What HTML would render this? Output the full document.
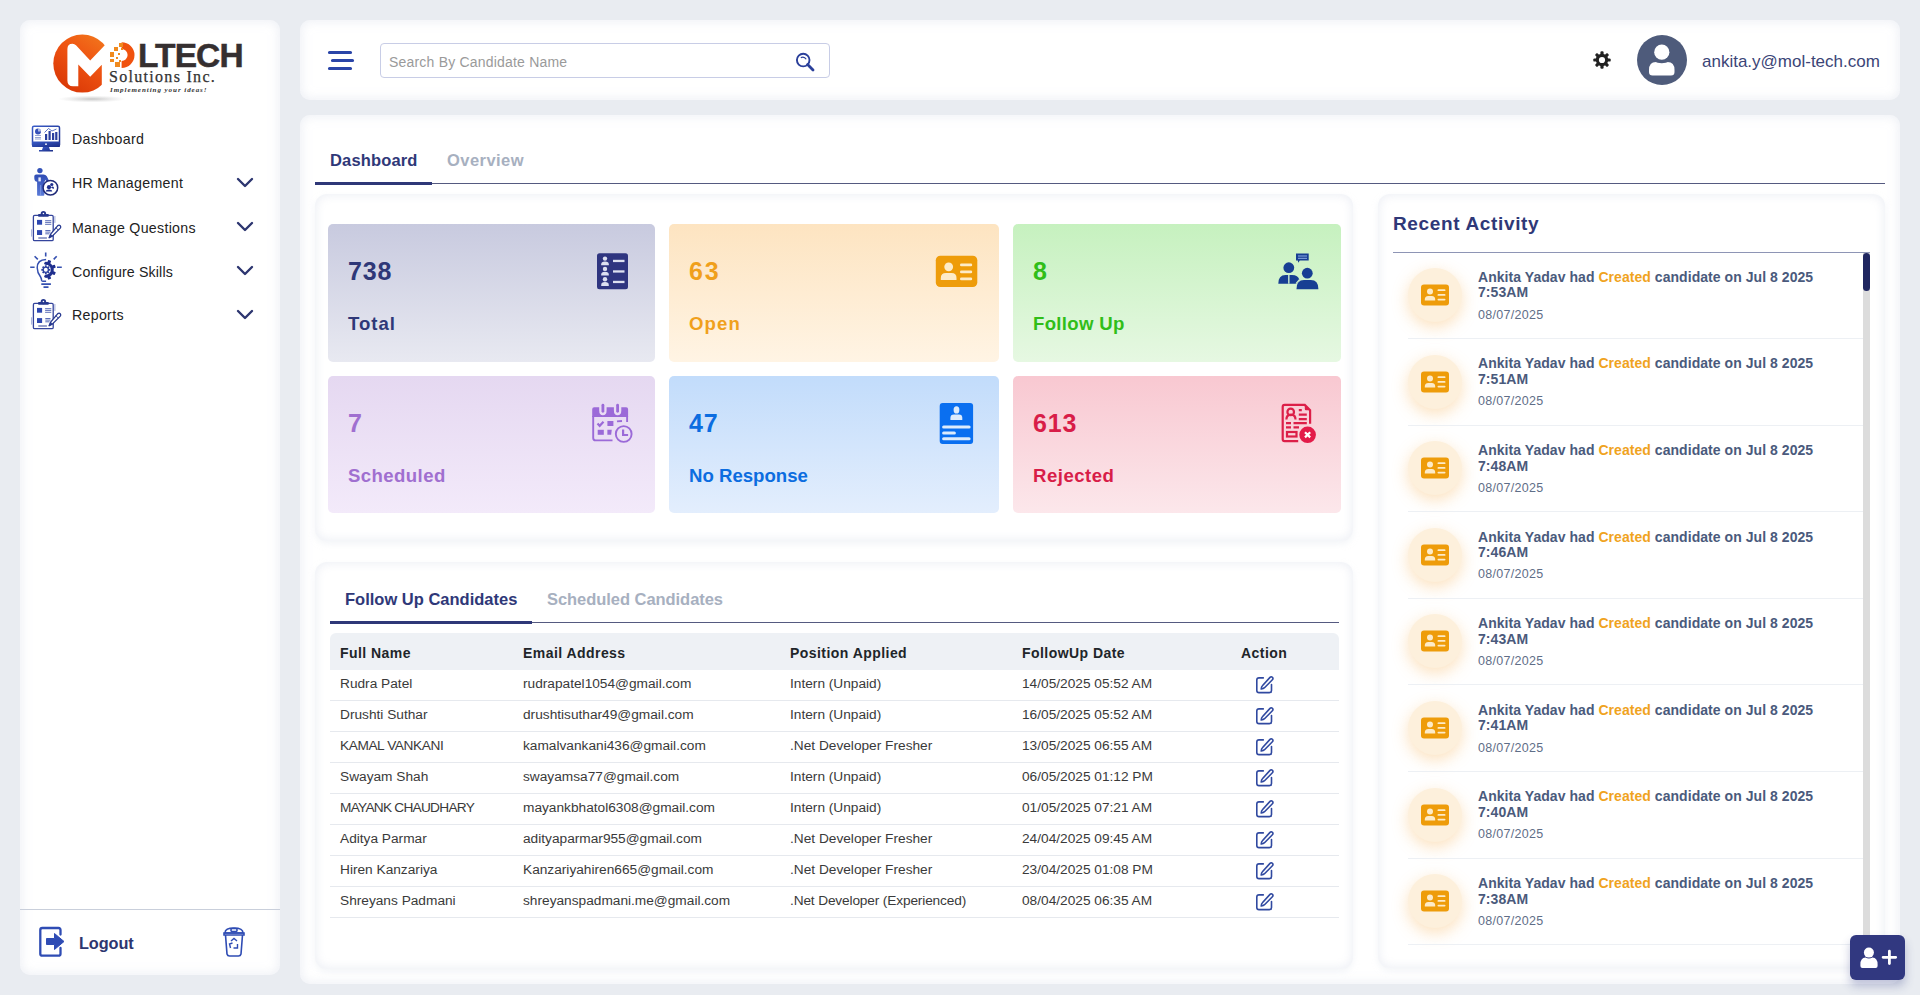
<!DOCTYPE html>
<html><head><meta charset="utf-8">
<style>
*{box-sizing:border-box;margin:0;padding:0}
html,body{width:1920px;height:995px;overflow:hidden;background:#e9ecf1;font-family:"Liberation Sans",sans-serif}
.abs{position:absolute}
.card{position:absolute;background:#fff;border-radius:10px;box-shadow:inset 0 0 10px 2px rgba(225,230,238,0.55)}
.sub{position:absolute;background:#fff;border-radius:12px;box-shadow:inset 0 0 9px 2px rgba(228,232,240,0.6),0 3px 6px rgba(220,225,235,0.35)}
.mi{left:72px;font-size:14.2px;color:#222;letter-spacing:0.3px}
.sc{position:absolute;border-radius:5px}
.num{position:absolute;white-space:nowrap;line-height:1;font-size:25px;font-weight:bold;letter-spacing:0.8px}
.lbl{position:absolute;white-space:nowrap;line-height:1;font-size:18.6px;font-weight:bold;letter-spacing:0.2px}
.th{position:absolute;white-space:nowrap;line-height:1;top:646px;font-size:14px;font-weight:bold;color:#212529;letter-spacing:0.45px}
.td{position:absolute;white-space:nowrap;line-height:1;font-size:13.7px;color:#3a3a3a;letter-spacing:0px}
.ic{position:absolute;width:54px;height:54px;border-radius:50%;background:#fdf0dc;box-shadow:0 5px 16px rgba(248,180,90,0.4)}
.at{position:absolute;left:1478px;white-space:nowrap;line-height:15.6px;font-size:14px;font-weight:bold;color:#4a5a7c;letter-spacing:0.05px}
.ad{position:absolute;left:1478px;white-space:nowrap;line-height:1;font-size:12.5px;color:#5f6e88;letter-spacing:0.3px}
.t{position:absolute;white-space:nowrap;line-height:1}
</style></head><body>

<!-- SIDEBAR -->
<div class="card" style="left:20px;top:20px;width:260px;height:955px"></div>
<div class="abs" style="left:0;top:0;width:280px;height:110px">
<svg class="abs" style="left:0;top:0" width="280" height="110" viewBox="0 0 280 110">
<defs>
<linearGradient id="og" x1="0.9" y1="0" x2="0.2" y2="1"><stop offset="0" stop-color="#f27a1e"/><stop offset="0.45" stop-color="#ef5412"/><stop offset="1" stop-color="#d83606"/></linearGradient>
<radialGradient id="sh" cx="0.5" cy="0.5" r="0.5"><stop offset="0" stop-color="#9a9a9a" stop-opacity="0.55"/><stop offset="1" stop-color="#bbb" stop-opacity="0"/></radialGradient>
</defs>
<ellipse cx="92" cy="99" rx="34" ry="3.5" fill="url(#sh)"/>
<circle cx="82.3" cy="63.6" r="29" fill="url(#og)"/>
<path d="M53 63.6 A29.3 29.3 0 0 1 70 37 L79 63 Z" fill="#f06018" opacity="0.0"/>
<path fill="#fff" d="M67.4 80.5 V49 Q67.4 43.7 72.6 43.7 Q74.5 43.7 76 45.2 L90.2 60.6 L105 45 L116 34 V96 H101.8 V64.8 L90.2 76.8 L78.3 64.5 V86.3 H73 Q67.4 86.3 67.4 80.5 Z"/>
<!-- O -->
<path d="M121.6 42.2 A12.9 12.9 0 0 1 121.6 68 L121.6 61 A6 6 0 0 0 121.6 49 Z" fill="#f0520f"/>
<g fill="#f08a1e">
<rect x="119" y="43" width="4" height="4"/><rect x="114" y="47" width="4" height="4"/><rect x="110" y="52" width="4" height="5"/><rect x="110" y="59" width="4" height="3"/><rect x="115" y="62" width="5" height="5"/><rect x="118" y="53" width="2" height="2"/><rect x="116" y="57" width="2" height="2"/><rect x="121" y="48" width="2" height="2"/><rect x="119" y="60" width="2" height="2"/>
</g>
</svg>
<div class="t" style="left:138px;top:38.5px;font-size:33.5px;font-weight:bold;color:#352f30;letter-spacing:-0.9px;-webkit-text-stroke:0.5px #352f30">LTECH</div>
<div class="t" style="left:109px;top:69px;font-family:'Liberation Serif',serif;font-size:16px;color:#333;letter-spacing:1.3px;-webkit-text-stroke:0.25px #333">Solutions Inc.</div>
<div class="t" style="left:110px;top:87px;font-family:'Liberation Serif',serif;font-style:italic;font-weight:bold;font-size:7px;color:#333;letter-spacing:0.95px">Implementing your ideas!</div>
</div>


<!-- menu -->
<svg class="abs" style="left:31px;top:125px" width="30" height="27" viewBox="0 0 30 27">
<defs><linearGradient id="bg1" x1="0" y1="0" x2="1" y2="1"><stop offset="0" stop-color="#3a5cc8"/><stop offset="1" stop-color="#1a2c86"/></linearGradient></defs>
<rect x="1.5" y="1.2" width="27" height="20" rx="1.5" fill="none" stroke="url(#bg1)" stroke-width="1.5"/>
<rect x="1" y="16.5" width="28" height="5.5" rx="1" fill="url(#bg1)"/>
<circle cx="15" cy="19.2" r="0.9" fill="#fff"/>
<path d="M12 22 h6 l1 3 h3 v1.5 h-14 v-1.5 h3z" fill="url(#bg1)"/>
<circle cx="7" cy="6.5" r="3" fill="#3550b8"/><path d="M7 6.5 V3.5 A3 3 0 0 1 10 6.5z" fill="#fff" opacity="0.6"/>
<g stroke="#8a9ad0" stroke-width="0.9"><path d="M4 10.5h6M4 12.5h6M4 14h6"/></g>
<g fill="#2a3f9e"><rect x="14" y="9" width="2.2" height="6"/><rect x="17.5" y="6" width="2.2" height="9"/><rect x="21" y="8" width="2.2" height="7"/><rect x="24.2" y="7" width="2.2" height="8"/></g>
<path d="M13.5 7.5 L17.5 3.5 L21 6 L25.5 4" fill="none" stroke="#3550b8" stroke-width="0.8"/>
</svg>
<div class="t mi" style="top:132px">Dashboard</div>

<svg class="abs" style="left:28px;top:164px" width="38" height="36" viewBox="0 0 38 36">
<defs><linearGradient id="bg2" x1="0" y1="0" x2="0" y2="1"><stop offset="0" stop-color="#2f4cb4"/><stop offset="1" stop-color="#5a7ad8"/></linearGradient></defs>
<circle cx="11.9" cy="6.6" r="2.7" fill="#3352b8"/>
<path d="M8.2 10.4 H15.5 Q17.6 10.4 18.8 12.2 L20.8 16.2 L18.8 18.2 L17.5 15.8 L16.3 18.2 V31 Q16.3 31.8 15.5 31.8 H9.9 Q9.1 31.8 9.1 31 V17.8 Q6.3 17.2 6.3 14.2 V12.3 Q6.3 10.4 8.2 10.4z" fill="url(#bg2)"/>
<path d="M10.4 13.4 H12.8 V17.4 H10.4z" fill="#e8ecfa"/>
<path d="M12.6 21 V31.5" stroke="#8ea4e4" stroke-width="0.7"/>
<circle cx="22.4" cy="23.7" r="7.3" fill="#fff" stroke="#1f2a78" stroke-width="1.5"/>
<circle cx="21" cy="23.2" r="2.1" fill="#1f2f8e"/><path d="M17.8 27.4 Q17.8 25.4 21 25.4 Q24.2 25.4 24.2 27.4z" fill="#1f2f8e"/>
<circle cx="23.8" cy="20.5" r="1.6" fill="#1f2f8e"/><path d="M23 23.2 Q24.2 22.3 25.3 22.8 Q26.2 23.4 26 24.7 L24.6 24.5z" fill="#1f2f8e"/>
</svg>
<div class="t mi" style="top:176px">HR Management</div>

<svg class="abs" style="left:28px;top:206px" width="38" height="40" viewBox="0 0 38 40">
<rect x="5.4" y="9.4" width="19.8" height="25.3" rx="1.3" fill="#fff" stroke="#34449c" stroke-width="1.3"/>
<circle cx="15.4" cy="7.6" r="2.7" fill="#26388f"/><rect x="10" y="8" width="10.9" height="2.8" rx="1" fill="#26388f"/><circle cx="15.4" cy="7.5" r="0.8" fill="#fff"/>
<rect x="9" y="13.9" width="5.1" height="4.8" fill="#2d47b0"/><rect x="9" y="24.1" width="5.1" height="4.9" fill="#2d47b0"/>
<g stroke="#4a5db0" stroke-width="0.9"><path d="M17.1 14.7H23.3M17.1 16.4H23.3M17.1 18.3H23.3M17.3 24.5H22.5M17.3 26.1H22.5M17.3 27.8H21.5"/><path d="M10.3 32H18.9" stroke="#5664a8" stroke-width="1.2"/></g>
<g stroke="#8d9ad0" stroke-width="0.8"><path d="M3.6 23.3V30.6M26.9 10V16.9"/></g>
<path d="M29.8 19.6 Q31.2 18.7 32.3 19.8 Q33.3 21 32.3 22.1 L24.3 30.1 L21.1 31.8 L22.6 28.2 Z" fill="#fff" stroke="#26388f" stroke-width="1.3" stroke-linejoin="round"/>
<path d="M21.1 31.8 L22.6 28.2 L24.3 30.1 Z" fill="#26388f" stroke="#26388f" stroke-width="0.8"/>
<path d="M27.8 21.6 L30.3 24.1" stroke="#26388f" stroke-width="0.9"/>
</svg>
<div class="t mi" style="top:221px">Manage Questions</div>

<svg class="abs" style="left:28px;top:250px" width="38" height="40" viewBox="0 0 38 40">
<g stroke="#3550b0" stroke-width="1.6" fill="none" stroke-linecap="butt">
<path d="M17.7 2.4 V6.4 M6.6 6.2 L9.8 9.4 M28.7 6.2 L25.7 9.4 M2.2 17.3 H6.6 M29 17.3 H33.8"/>
<path d="M18.1 9.4 Q9.2 9.6 9.2 17.7 Q9.2 22.5 12.6 27 Q13.5 28.5 13.6 30.4 Q13.8 31.2 14.8 31.2 H18.1" stroke-width="1.5"/>
<path d="M13.3 34.2 H22.9 M15.5 37.2 H20.5" stroke-width="1.7"/>
</g>
<g fill="#1f2f8e"><path d="M17.80 11.80 A8.0 8.0 0 0 1 17.80 27.80 L17.80 24.80 A5.0 5.0 0 0 0 17.80 14.80 Z"/><rect x="24.80" y="18.20" width="3.2" height="3.2" rx="0.6" transform="rotate(-67 17.8 19.8)"/><rect x="24.80" y="18.20" width="3.2" height="3.2" rx="0.6" transform="rotate(-22 17.8 19.8)"/><rect x="24.80" y="18.20" width="3.2" height="3.2" rx="0.6" transform="rotate(22 17.8 19.8)"/><rect x="24.80" y="18.20" width="3.2" height="3.2" rx="0.6" transform="rotate(67 17.8 19.8)"/>
<circle cx="17.80" cy="13.30" r="1.5"/><circle cx="17.80" cy="26.30" r="1.5"/>
</g>
<g fill="#2a3f9e"><rect x="20.60" y="18.90" width="1.7" height="1.8" transform="rotate(0 17.8 19.8)"/><rect x="20.60" y="18.90" width="1.7" height="1.8" transform="rotate(45 17.8 19.8)"/><rect x="20.60" y="18.90" width="1.7" height="1.8" transform="rotate(90 17.8 19.8)"/><rect x="20.60" y="18.90" width="1.7" height="1.8" transform="rotate(135 17.8 19.8)"/><rect x="20.60" y="18.90" width="1.7" height="1.8" transform="rotate(180 17.8 19.8)"/><rect x="20.60" y="18.90" width="1.7" height="1.8" transform="rotate(225 17.8 19.8)"/><rect x="20.60" y="18.90" width="1.7" height="1.8" transform="rotate(270 17.8 19.8)"/><rect x="20.60" y="18.90" width="1.7" height="1.8" transform="rotate(315 17.8 19.8)"/></g>
<circle cx="17.8" cy="19.8" r="2.6" fill="none" stroke="#2a3f9e" stroke-width="1.3"/>
</svg>
<div class="t mi" style="top:265px;letter-spacing:0.15px">Configure Skills</div>

<svg class="abs" style="left:28px;top:294px" width="38" height="40" viewBox="0 0 38 40">
<rect x="5.4" y="9.4" width="19.8" height="25.3" rx="1.3" fill="#fff" stroke="#34449c" stroke-width="1.3"/>
<circle cx="15.4" cy="7.6" r="2.7" fill="#26388f"/><rect x="10" y="8" width="10.9" height="2.8" rx="1" fill="#26388f"/><circle cx="15.4" cy="7.5" r="0.8" fill="#fff"/>
<rect x="9" y="13.9" width="5.1" height="4.8" fill="#2d47b0"/><rect x="9" y="24.1" width="5.1" height="4.9" fill="#2d47b0"/>
<g stroke="#4a5db0" stroke-width="0.9"><path d="M17.1 14.7H23.3M17.1 16.4H23.3M17.1 18.3H23.3M17.3 24.5H22.5M17.3 26.1H22.5M17.3 27.8H21.5"/><path d="M10.3 32H18.9" stroke="#5664a8" stroke-width="1.2"/></g>
<g stroke="#8d9ad0" stroke-width="0.8"><path d="M3.6 23.3V30.6M26.9 10V16.9"/></g>
<path d="M29.8 19.6 Q31.2 18.7 32.3 19.8 Q33.3 21 32.3 22.1 L24.3 30.1 L21.1 31.8 L22.6 28.2 Z" fill="#fff" stroke="#26388f" stroke-width="1.3" stroke-linejoin="round"/>
<path d="M21.1 31.8 L22.6 28.2 L24.3 30.1 Z" fill="#26388f" stroke="#26388f" stroke-width="0.8"/>
<path d="M27.8 21.6 L30.3 24.1" stroke="#26388f" stroke-width="0.9"/>
</svg>
<div class="t mi" style="top:308px">Reports</div>

<svg class="abs" style="left:236px;top:177px" width="18" height="11" viewBox="0 0 18 11"><path d="M2 2 L9 9 L16 2" fill="none" stroke="#2d3670" stroke-width="2.4" stroke-linecap="round" stroke-linejoin="round"/></svg>
<svg class="abs" style="left:236px;top:221px" width="18" height="11" viewBox="0 0 18 11"><path d="M2 2 L9 9 L16 2" fill="none" stroke="#2d3670" stroke-width="2.4" stroke-linecap="round" stroke-linejoin="round"/></svg>
<svg class="abs" style="left:236px;top:265px" width="18" height="11" viewBox="0 0 18 11"><path d="M2 2 L9 9 L16 2" fill="none" stroke="#2d3670" stroke-width="2.4" stroke-linecap="round" stroke-linejoin="round"/></svg>
<svg class="abs" style="left:236px;top:309px" width="18" height="11" viewBox="0 0 18 11"><path d="M2 2 L9 9 L16 2" fill="none" stroke="#2d3670" stroke-width="2.4" stroke-linecap="round" stroke-linejoin="round"/></svg>

<!-- logout -->
<div class="abs" style="left:20px;top:909px;width:260px;height:1px;background:#c9cfdb"></div>
<svg class="abs" style="left:38px;top:926px" width="28" height="32" viewBox="0 0 28 32">
<path d="M22.5 8.5 V4 Q22.5 2 20.5 2 H4.3 Q2.3 2 2.3 4 V27.7 Q2.3 29.7 4.3 29.7 H20.5 Q22.5 29.7 22.5 27.7 V22" fill="none" stroke="#2f4cb4" stroke-width="2.3" stroke-linecap="round"/>
<path d="M8.5 12.5 H16.5 V7.5 L26 15.5 L16.5 23.5 V18.5 H8.5z" fill="#2f4cb4" stroke="#2f4cb4" stroke-width="1" stroke-linejoin="round"/>
</svg>
<div class="t" style="left:79px;top:935px;font-size:16.3px;font-weight:bold;color:#2d3670;letter-spacing:-0.1px">Logout</div>
<svg class="abs" style="left:222px;top:926px" width="24" height="32" viewBox="0 0 24 32">
<g fill="none" stroke="#2f4cb4" stroke-width="1.6">
<path d="M3 7 Q3 2 12 2 Q21 2 21 7 Z"/><rect x="9" y="2.5" width="6" height="3" rx="1"/>
<path d="M2 7 H22 V9 H2z"/>
<path d="M3.5 9 L5 28 Q5.5 30 7.5 30 H16.5 Q18.5 30 19 28 L20.5 9"/>
</g>
<path d="M9 15 l3 -2.5 l3 2.5 M15.5 18 l0 4 l-4 0 M8.5 22 l-1 -4 l3 -1" fill="none" stroke="#2f4cb4" stroke-width="1.4"/>
</svg>

<!-- HEADER -->
<div class="card" style="left:300px;top:20px;width:1600px;height:80px"></div>


<svg class="abs" style="left:327px;top:50px" width="28" height="21" viewBox="0 0 28 21"><g stroke="#2a45a8" stroke-width="3.2" stroke-linecap="round"><path d="M2.5 2.5 H23.5 M5.5 10.5 H25.5 M2.5 18.5 H23.5"/></g></svg>
<div class="abs" style="left:380px;top:43px;width:450px;height:35px;border:1px solid #c8cde6;border-radius:4px;background:#fff"></div>
<div class="t" style="left:389px;top:55px;font-size:14px;color:#9a9a9a;letter-spacing:0.2px">Search By Candidate Name</div>
<svg class="abs" style="left:794px;top:51px" width="22" height="22" viewBox="0 0 22 22"><circle cx="9.2" cy="9.1" r="6.3" fill="none" stroke="#2a3f9a" stroke-width="1.9"/><path d="M13.6 13.6 L19 19" stroke="#2a3f9a" stroke-width="2.8" stroke-linecap="round"/><path d="M6.8 6.6 A4.2 4.2 0 0 1 12.2 8.3" fill="none" stroke="#2a3f9a" stroke-width="1.2"/></svg>
<svg class="abs" style="left:1592px;top:50px" width="20" height="20" viewBox="0 0 20 20">
<g fill="#222"><circle cx="10" cy="10" r="6.2"/>
<g id="tooth"><rect x="8.4" y="1.3" width="3.2" height="4" rx="1.2"/></g>
<use href="#tooth" transform="rotate(45 10 10)"/><use href="#tooth" transform="rotate(90 10 10)"/><use href="#tooth" transform="rotate(135 10 10)"/><use href="#tooth" transform="rotate(180 10 10)"/><use href="#tooth" transform="rotate(225 10 10)"/><use href="#tooth" transform="rotate(270 10 10)"/><use href="#tooth" transform="rotate(315 10 10)"/>
</g><circle cx="10" cy="10" r="3.1" fill="#fff"/></svg>
<svg class="abs" style="left:1637px;top:35px" width="50" height="50" viewBox="0 0 50 50"><circle cx="25" cy="25" r="25" fill="#4e5b7b"/><circle cx="24.8" cy="17.2" r="7.6" fill="#fff"/><path d="M12 35 Q12 27 19 27 H30.5 Q37.5 27 37.5 35 V37 Q37.5 40.5 34 40.5 H15.5 Q12 40.5 12 37z" fill="#fff"/><path d="M17 25.5 Q24.8 29.5 32.5 25.5" stroke="#4e5b7b" stroke-width="1.6" fill="none"/></svg>
<div class="t" style="left:1702px;top:53px;font-size:17px;color:#3b4577;letter-spacing:0px">ankita.y@mol-tech.com</div>

<!-- MAIN -->
<div class="card" style="left:300px;top:115px;width:1600px;height:869px"></div>


<!-- tabs -->
<div class="t" style="left:330px;top:152px;font-size:16.5px;font-weight:bold;color:#2f3878;letter-spacing:0.15px">Dashboard</div>
<div class="t" style="left:447px;top:152px;font-size:16.5px;font-weight:bold;color:#a7b0c0;letter-spacing:0.45px">Overview</div>
<div class="abs" style="left:315px;top:182.5px;width:1570px;height:1.6px;background:#555a80"></div>
<div class="abs" style="left:315px;top:182px;width:117px;height:3px;background:#2f3878"></div>

<!-- stats -->
<div class="sub" style="left:315px;top:194px;width:1038px;height:347px"></div>
<div class="sc" style="left:328px;top:224px;width:327px;height:138px;background:linear-gradient(#c8cadf,#e8e9f1)"></div>
<div class="sc" style="left:669px;top:224px;width:330px;height:138px;background:linear-gradient(#fde4c1,#fff4e4)"></div>
<div class="sc" style="left:1013px;top:224px;width:328px;height:138px;background:linear-gradient(#c6f1bf,#e6f8e2)"></div>
<div class="sc" style="left:328px;top:376px;width:327px;height:137px;background:linear-gradient(#e5d8f1,#f3eafa)"></div>
<div class="sc" style="left:669px;top:376px;width:330px;height:137px;background:linear-gradient(#c2dcfb,#e3eefd)"></div>
<div class="sc" style="left:1013px;top:376px;width:328px;height:137px;background:linear-gradient(#f8c8d1,#fce7eb)"></div>

<div class="num" style="left:348px;top:259px;color:#2f3878">738</div>
<div class="lbl" style="left:348px;top:315px;color:#2f3878;letter-spacing:1.0px">Total</div>
<div class="num" style="left:689px;top:259px;color:#f0a01c;letter-spacing:1.8px">63</div>
<div class="lbl" style="left:689px;top:315px;color:#f0a01c;letter-spacing:1.1px">Open</div>
<div class="num" style="left:1033px;top:259px;color:#30be18">8</div>
<div class="lbl" style="left:1033px;top:315px;color:#30be18;letter-spacing:0.32px">Follow Up</div>
<div class="num" style="left:348px;top:411px;color:#a06fd0">7</div>
<div class="lbl" style="left:348px;top:467px;color:#a06fd0;letter-spacing:0.41px">Scheduled</div>
<div class="num" style="left:689px;top:411px;color:#0c6de0">47</div>
<div class="lbl" style="left:689px;top:467px;color:#0c6de0;letter-spacing:0.0px">No Response</div>
<div class="num" style="left:1033px;top:411px;color:#d81d48">613</div>
<div class="lbl" style="left:1033px;top:467px;color:#d81d48;letter-spacing:0.49px">Rejected</div>


<!-- stat icons -->
<svg class="abs" style="left:596px;top:253px" width="33" height="37" viewBox="0 0 33 37">
<rect x="1" y="0.3" width="31" height="36" rx="2.5" fill="#2f3580"/>
<g fill="#dde0f0">
<circle cx="9" cy="5.6" r="2.2"/><path d="M5.2 12.2 V11.2 Q5.2 8.4 9 8.4 Q12.8 8.4 12.8 11.2 V12.2z"/>
<circle cx="9" cy="15.9" r="2.2"/><path d="M5.2 22.5 V21.5 Q5.2 18.7 9 18.7 Q12.8 18.7 12.8 21.5 V22.5z"/>
<circle cx="9" cy="26.3" r="2.2"/><path d="M5.2 32.9 V31.9 Q5.2 29.1 9 29.1 Q12.8 29.1 12.8 31.9 V32.9z"/>
<rect x="17" y="6.8" width="11.5" height="2.3"/><rect x="17" y="17.3" width="11.5" height="2.3"/><rect x="17" y="27.8" width="11.5" height="2.3"/>
</g></svg>

<svg class="abs" style="left:935px;top:255px" width="43" height="33" viewBox="0 0 43 33">
<rect x="0.8" y="0.8" width="41.5" height="31.2" rx="4.5" fill="#ee9c0a"/>
<g fill="#fdebc8">
<circle cx="13.7" cy="11.8" r="4.4"/><path d="M5.8 25 V23 Q5.8 18 11 18 H16.5 Q21.5 18 21.5 23 V25z"/>
<rect x="25" y="8.6" width="12.2" height="2.6" rx="1.3"/><rect x="25" y="15.6" width="12.2" height="2.6" rx="1.3"/><rect x="25" y="22.6" width="12.2" height="2.6" rx="1.3"/>
</g></svg>

<svg class="abs" style="left:1270px;top:245px" width="55" height="50" viewBox="0 0 55 50">
<g fill="#173e93">
<path d="M26 8.6 H38.7 V15.5 H29.8 L28.2 17.7 L27.8 15.5 H26z"/>
<circle cx="18.8" cy="22.7" r="5.4"/>
<path d="M8.3 38.7 Q8.3 29.9 15.5 29.9 H22 Q28 29.9 29.5 35 L27 38.7z"/>
<circle cx="37.3" cy="28.2" r="5.4"/>
<path d="M26.5 44.2 Q26.5 35.1 34 35.1 H40.8 Q48.4 35.1 48.4 44.2z"/>
</g>
<g stroke="#8fb0e6" stroke-width="1"><path d="M28 11 H37 M28 13.3 H37"/></g>
<path d="M18.8 30 V38.7" stroke="#b8d8c8" stroke-width="1.6"/>
<path d="M26 38.7 L29.6 34.5" stroke="#d3f2cc" stroke-width="1.2"/>
</svg>

<svg class="abs" style="left:580px;top:395px" width="65" height="55" viewBox="0 0 65 55">
<g fill="#9b6ad8">
<path d="M14.2 12.2 H19.2 V15.5 Q19.2 20.2 22.9 20.2 Q26.6 20.2 26.6 15.5 V12.2 H33.9 V15.5 Q33.9 20.2 37.6 20.2 Q41.3 20.2 41.3 15.5 V12.2 H46.1 Q48.1 12.2 48.1 14.2 V22.1 H12.2 V14.2 Q12.2 12.2 14.2 12.2z"/>
<rect x="21.5" y="8.8" width="2.8" height="8.9" rx="1.4"/><rect x="36.2" y="8.8" width="2.8" height="8.9" rx="1.4"/>
<rect x="27.4" y="26" width="6" height="5"/><rect x="17.7" y="34.8" width="6.1" height="5"/><path d="M27.4 34.8 H31.8 L31.2 39.8 H27.4z"/>
</g>
<g fill="none" stroke="#9b6ad8" stroke-width="1.9">
<path d="M13.2 21 V43 Q13.2 45.4 15.6 45.4 H32.5"/><path d="M47.1 21 V27"/>
<path d="M17.5 28.5 L19.7 30.8 L23.5 26.8" stroke-width="2.2"/>
<path d="M37 26.4 L42 26"/>
<circle cx="43.7" cy="39" r="7.9"/>
<path d="M43.1 34.5 V40 H48.1" stroke-width="2.2"/>
</g></svg>

<svg class="abs" style="left:925px;top:395px" width="55" height="55" viewBox="0 0 55 55">
<rect x="14.7" y="8" width="33.4" height="41" rx="3" fill="#0a6ff0"/>
<g fill="#dcebfc">
<ellipse cx="31.5" cy="14.9" rx="2.9" ry="3.6"/><path d="M25.4 24.9 V23 Q25.4 19.6 29 19.6 H34 Q37.3 19.6 37.3 23 V24.9z"/>
<rect x="17.1" y="30.6" width="28.5" height="3" rx="1.5"/><rect x="17.1" y="36.4" width="13.8" height="3" rx="1.5"/><rect x="17.1" y="42.2" width="28.5" height="3" rx="1.5"/>
</g></svg>

<svg class="abs" style="left:1270px;top:395px" width="55" height="55" viewBox="0 0 55 55">
<g fill="none" stroke="#dc1f48" stroke-width="2.2">
<path d="M28.2 46.2 H14.6 Q12.7 46.2 12.7 44.3 V11.8 Q12.7 9.9 14.6 9.9 H34.8 L40.1 15.2 V28.8"/>
<circle cx="20.7" cy="16.9" r="3.3"/>
<path d="M16.4 24.5 Q16.4 19.6 21 19.6 Q25.5 19.6 25.5 24.5"/>
<path d="M28.8 15.2 H31.8 M28.8 19.6 H36.8 M28.8 24.1 H36.8 M16 28.2 H21 M23.5 28.2 H36.8 M16 32.4 H21 M23.5 32.4 H29"/>
<rect x="17" y="37" width="9.5" height="4.5"/>
</g>
<path d="M34.8 9.9 L40.1 15.2 H36 Q34.8 15.2 34.8 14z" fill="#dc1f48"/>
<circle cx="37.6" cy="39.8" r="8.3" fill="#e31b49"/>
<path d="M35 37.2 L40.2 42.4 M40.2 37.2 L35 42.4" stroke="#fff" stroke-width="2.2"/>
</svg>


<!-- table container -->
<div class="sub" style="left:315px;top:562px;width:1038px;height:407px"></div>
<div class="t" style="left:345px;top:591px;font-size:16.5px;font-weight:bold;color:#2f3878;letter-spacing:0px">Follow Up Candidates</div>
<div class="t" style="left:547px;top:591px;font-size:16.5px;font-weight:bold;color:#a7b0c0;letter-spacing:-0.05px">Scheduled Candidates</div>
<div class="abs" style="left:330px;top:621.5px;width:1009px;height:1.6px;background:#555a80"></div>
<div class="abs" style="left:330px;top:621px;width:202px;height:3px;background:#2f3878"></div>
<div class="abs" style="left:330px;top:633px;width:1009px;height:37px;background:#eef1f5;border-radius:6px 6px 0 0"></div>
<div class="th" style="left:340px">Full Name</div>
<div class="th" style="left:523px">Email Address</div>
<div class="th" style="left:790px">Position Applied</div>
<div class="th" style="left:1022px">FollowUp Date</div>
<div class="th" style="left:1241px">Action</div>
<div class="td" style="left:340px;top:677px">Rudra Patel</div><div class="td" style="left:523px;top:677px">rudrapatel1054@gmail.com</div><div class="td" style="left:790px;top:677px">Intern (Unpaid)</div><div class="td" style="left:1022px;top:677px">14/05/2025 05:52 AM</div>
<svg class="abs" style="left:1254px;top:675px" width="20" height="20" viewBox="0 0 20 20"><path d="M9.3 2.9 H5 Q2.8 2.9 2.8 5.1 V15.4 Q2.8 17.6 5 17.6 H15.3 Q17.5 17.6 17.5 15.4 V9.6" fill="none" stroke="#3049a0" stroke-width="1.6" stroke-linecap="round"/><path d="M16 2.4 Q17.2 1.2 18.4 2.4 Q19.6 3.6 18.4 4.8 L10.5 12.7 Q9.5 13.6 7.2 14 Q7.4 11.8 8.4 10.8 Z" fill="none" stroke="#3049a0" stroke-width="1.6" stroke-linejoin="round"/></svg>
<div class="abs" style="left:330px;top:700px;width:1009px;height:1px;background:#e6e9ee"></div>
<div class="td" style="left:340px;top:708px">Drushti Suthar</div><div class="td" style="left:523px;top:708px">drushtisuthar49@gmail.com</div><div class="td" style="left:790px;top:708px">Intern (Unpaid)</div><div class="td" style="left:1022px;top:708px">16/05/2025 05:52 AM</div>
<svg class="abs" style="left:1254px;top:706px" width="20" height="20" viewBox="0 0 20 20"><path d="M9.3 2.9 H5 Q2.8 2.9 2.8 5.1 V15.4 Q2.8 17.6 5 17.6 H15.3 Q17.5 17.6 17.5 15.4 V9.6" fill="none" stroke="#3049a0" stroke-width="1.6" stroke-linecap="round"/><path d="M16 2.4 Q17.2 1.2 18.4 2.4 Q19.6 3.6 18.4 4.8 L10.5 12.7 Q9.5 13.6 7.2 14 Q7.4 11.8 8.4 10.8 Z" fill="none" stroke="#3049a0" stroke-width="1.6" stroke-linejoin="round"/></svg>
<div class="abs" style="left:330px;top:731px;width:1009px;height:1px;background:#e6e9ee"></div>
<div class="td" style="left:340px;top:739px;letter-spacing:-0.42px">KAMAL VANKANI</div><div class="td" style="left:523px;top:739px">kamalvankani436@gmail.com</div><div class="td" style="left:790px;top:739px">.Net Developer Fresher</div><div class="td" style="left:1022px;top:739px">13/05/2025 06:55 AM</div>
<svg class="abs" style="left:1254px;top:737px" width="20" height="20" viewBox="0 0 20 20"><path d="M9.3 2.9 H5 Q2.8 2.9 2.8 5.1 V15.4 Q2.8 17.6 5 17.6 H15.3 Q17.5 17.6 17.5 15.4 V9.6" fill="none" stroke="#3049a0" stroke-width="1.6" stroke-linecap="round"/><path d="M16 2.4 Q17.2 1.2 18.4 2.4 Q19.6 3.6 18.4 4.8 L10.5 12.7 Q9.5 13.6 7.2 14 Q7.4 11.8 8.4 10.8 Z" fill="none" stroke="#3049a0" stroke-width="1.6" stroke-linejoin="round"/></svg>
<div class="abs" style="left:330px;top:762px;width:1009px;height:1px;background:#e6e9ee"></div>
<div class="td" style="left:340px;top:770px">Swayam Shah</div><div class="td" style="left:523px;top:770px">swayamsa77@gmail.com</div><div class="td" style="left:790px;top:770px">Intern (Unpaid)</div><div class="td" style="left:1022px;top:770px">06/05/2025 01:12 PM</div>
<svg class="abs" style="left:1254px;top:768px" width="20" height="20" viewBox="0 0 20 20"><path d="M9.3 2.9 H5 Q2.8 2.9 2.8 5.1 V15.4 Q2.8 17.6 5 17.6 H15.3 Q17.5 17.6 17.5 15.4 V9.6" fill="none" stroke="#3049a0" stroke-width="1.6" stroke-linecap="round"/><path d="M16 2.4 Q17.2 1.2 18.4 2.4 Q19.6 3.6 18.4 4.8 L10.5 12.7 Q9.5 13.6 7.2 14 Q7.4 11.8 8.4 10.8 Z" fill="none" stroke="#3049a0" stroke-width="1.6" stroke-linejoin="round"/></svg>
<div class="abs" style="left:330px;top:793px;width:1009px;height:1px;background:#e6e9ee"></div>
<div class="td" style="left:340px;top:801px;letter-spacing:-0.75px">MAYANK CHAUDHARY</div><div class="td" style="left:523px;top:801px">mayankbhatol6308@gmail.com</div><div class="td" style="left:790px;top:801px">Intern (Unpaid)</div><div class="td" style="left:1022px;top:801px">01/05/2025 07:21 AM</div>
<svg class="abs" style="left:1254px;top:799px" width="20" height="20" viewBox="0 0 20 20"><path d="M9.3 2.9 H5 Q2.8 2.9 2.8 5.1 V15.4 Q2.8 17.6 5 17.6 H15.3 Q17.5 17.6 17.5 15.4 V9.6" fill="none" stroke="#3049a0" stroke-width="1.6" stroke-linecap="round"/><path d="M16 2.4 Q17.2 1.2 18.4 2.4 Q19.6 3.6 18.4 4.8 L10.5 12.7 Q9.5 13.6 7.2 14 Q7.4 11.8 8.4 10.8 Z" fill="none" stroke="#3049a0" stroke-width="1.6" stroke-linejoin="round"/></svg>
<div class="abs" style="left:330px;top:824px;width:1009px;height:1px;background:#e6e9ee"></div>
<div class="td" style="left:340px;top:832px">Aditya Parmar</div><div class="td" style="left:523px;top:832px">adityaparmar955@gmail.com</div><div class="td" style="left:790px;top:832px">.Net Developer Fresher</div><div class="td" style="left:1022px;top:832px">24/04/2025 09:45 AM</div>
<svg class="abs" style="left:1254px;top:830px" width="20" height="20" viewBox="0 0 20 20"><path d="M9.3 2.9 H5 Q2.8 2.9 2.8 5.1 V15.4 Q2.8 17.6 5 17.6 H15.3 Q17.5 17.6 17.5 15.4 V9.6" fill="none" stroke="#3049a0" stroke-width="1.6" stroke-linecap="round"/><path d="M16 2.4 Q17.2 1.2 18.4 2.4 Q19.6 3.6 18.4 4.8 L10.5 12.7 Q9.5 13.6 7.2 14 Q7.4 11.8 8.4 10.8 Z" fill="none" stroke="#3049a0" stroke-width="1.6" stroke-linejoin="round"/></svg>
<div class="abs" style="left:330px;top:855px;width:1009px;height:1px;background:#e6e9ee"></div>
<div class="td" style="left:340px;top:863px">Hiren Kanzariya</div><div class="td" style="left:523px;top:863px">Kanzariyahiren665@gmail.com</div><div class="td" style="left:790px;top:863px">.Net Developer Fresher</div><div class="td" style="left:1022px;top:863px">23/04/2025 01:08 PM</div>
<svg class="abs" style="left:1254px;top:861px" width="20" height="20" viewBox="0 0 20 20"><path d="M9.3 2.9 H5 Q2.8 2.9 2.8 5.1 V15.4 Q2.8 17.6 5 17.6 H15.3 Q17.5 17.6 17.5 15.4 V9.6" fill="none" stroke="#3049a0" stroke-width="1.6" stroke-linecap="round"/><path d="M16 2.4 Q17.2 1.2 18.4 2.4 Q19.6 3.6 18.4 4.8 L10.5 12.7 Q9.5 13.6 7.2 14 Q7.4 11.8 8.4 10.8 Z" fill="none" stroke="#3049a0" stroke-width="1.6" stroke-linejoin="round"/></svg>
<div class="abs" style="left:330px;top:886px;width:1009px;height:1px;background:#e6e9ee"></div>
<div class="td" style="left:340px;top:894px">Shreyans Padmani</div><div class="td" style="left:523px;top:894px">shreyanspadmani.me@gmail.com</div><div class="td" style="left:790px;top:894px;letter-spacing:-0.15px">.Net Developer (Experienced)</div><div class="td" style="left:1022px;top:894px">08/04/2025 06:35 AM</div>
<svg class="abs" style="left:1254px;top:892px" width="20" height="20" viewBox="0 0 20 20"><path d="M9.3 2.9 H5 Q2.8 2.9 2.8 5.1 V15.4 Q2.8 17.6 5 17.6 H15.3 Q17.5 17.6 17.5 15.4 V9.6" fill="none" stroke="#3049a0" stroke-width="1.6" stroke-linecap="round"/><path d="M16 2.4 Q17.2 1.2 18.4 2.4 Q19.6 3.6 18.4 4.8 L10.5 12.7 Q9.5 13.6 7.2 14 Q7.4 11.8 8.4 10.8 Z" fill="none" stroke="#3049a0" stroke-width="1.6" stroke-linejoin="round"/></svg>
<div class="abs" style="left:330px;top:917px;width:1009px;height:1px;background:#e6e9ee"></div>


<!-- activity container -->
<div class="sub" style="left:1378px;top:194px;width:507px;height:774px"></div>
<div class="t" style="left:1393px;top:213.5px;font-size:19px;font-weight:bold;color:#2f3878;letter-spacing:0.65px">Recent Activity</div>
<div class="abs" style="left:1393px;top:251.5px;width:477px;height:1.5px;background:#8e95b5"></div>
<div class="abs" style="left:1863px;top:253px;width:7px;height:690px;background:#dcdcdc"></div>
<div class="abs" style="left:1863px;top:253px;width:7px;height:38px;background:#1f2660;border-radius:3.5px"></div>
<div class="ic" style="left:1408px;top:268.0px"></div>
<svg class="abs" style="left:1421px;top:284.0px" width="28" height="22" viewBox="0 0 28 22"><rect x="0" y="0.5" width="28" height="21" rx="3" fill="#ee9c0a"/><g fill="#fdebc8"><circle cx="9" cy="7.5" r="3"/><path d="M3.8 16.5 V15.5 Q3.8 12 7.3 12 H10.8 Q14.2 12 14.2 15.5 V16.5z"/><rect x="16.5" y="5.3" width="8" height="1.8" rx="0.9"/><rect x="16.5" y="10" width="8" height="1.8" rx="0.9"/><rect x="16.5" y="14.7" width="8" height="1.8" rx="0.9"/></g></svg>
<div class="at" style="top:269.8px">Ankita Yadav had <span style="color:#f0a31e">Created</span> candidate on Jul 8 2025<br>7:53AM</div>
<div class="ad" style="top:308.5px">08/07/2025</div>
<div class="abs" style="left:1408px;top:338px;width:455px;height:1px;background:#edf0f4"></div>
<div class="ic" style="left:1408px;top:354.6px"></div>
<svg class="abs" style="left:1421px;top:370.6px" width="28" height="22" viewBox="0 0 28 22"><rect x="0" y="0.5" width="28" height="21" rx="3" fill="#ee9c0a"/><g fill="#fdebc8"><circle cx="9" cy="7.5" r="3"/><path d="M3.8 16.5 V15.5 Q3.8 12 7.3 12 H10.8 Q14.2 12 14.2 15.5 V16.5z"/><rect x="16.5" y="5.3" width="8" height="1.8" rx="0.9"/><rect x="16.5" y="10" width="8" height="1.8" rx="0.9"/><rect x="16.5" y="14.7" width="8" height="1.8" rx="0.9"/></g></svg>
<div class="at" style="top:356.4px">Ankita Yadav had <span style="color:#f0a31e">Created</span> candidate on Jul 8 2025<br>7:51AM</div>
<div class="ad" style="top:395.1px">08/07/2025</div>
<div class="abs" style="left:1408px;top:425px;width:455px;height:1px;background:#edf0f4"></div>
<div class="ic" style="left:1408px;top:441.2px"></div>
<svg class="abs" style="left:1421px;top:457.2px" width="28" height="22" viewBox="0 0 28 22"><rect x="0" y="0.5" width="28" height="21" rx="3" fill="#ee9c0a"/><g fill="#fdebc8"><circle cx="9" cy="7.5" r="3"/><path d="M3.8 16.5 V15.5 Q3.8 12 7.3 12 H10.8 Q14.2 12 14.2 15.5 V16.5z"/><rect x="16.5" y="5.3" width="8" height="1.8" rx="0.9"/><rect x="16.5" y="10" width="8" height="1.8" rx="0.9"/><rect x="16.5" y="14.7" width="8" height="1.8" rx="0.9"/></g></svg>
<div class="at" style="top:443.0px">Ankita Yadav had <span style="color:#f0a31e">Created</span> candidate on Jul 8 2025<br>7:48AM</div>
<div class="ad" style="top:481.7px">08/07/2025</div>
<div class="abs" style="left:1408px;top:511px;width:455px;height:1px;background:#edf0f4"></div>
<div class="ic" style="left:1408px;top:527.8px"></div>
<svg class="abs" style="left:1421px;top:543.8px" width="28" height="22" viewBox="0 0 28 22"><rect x="0" y="0.5" width="28" height="21" rx="3" fill="#ee9c0a"/><g fill="#fdebc8"><circle cx="9" cy="7.5" r="3"/><path d="M3.8 16.5 V15.5 Q3.8 12 7.3 12 H10.8 Q14.2 12 14.2 15.5 V16.5z"/><rect x="16.5" y="5.3" width="8" height="1.8" rx="0.9"/><rect x="16.5" y="10" width="8" height="1.8" rx="0.9"/><rect x="16.5" y="14.7" width="8" height="1.8" rx="0.9"/></g></svg>
<div class="at" style="top:529.6px">Ankita Yadav had <span style="color:#f0a31e">Created</span> candidate on Jul 8 2025<br>7:46AM</div>
<div class="ad" style="top:568.3px">08/07/2025</div>
<div class="abs" style="left:1408px;top:598px;width:455px;height:1px;background:#edf0f4"></div>
<div class="ic" style="left:1408px;top:614.4px"></div>
<svg class="abs" style="left:1421px;top:630.4px" width="28" height="22" viewBox="0 0 28 22"><rect x="0" y="0.5" width="28" height="21" rx="3" fill="#ee9c0a"/><g fill="#fdebc8"><circle cx="9" cy="7.5" r="3"/><path d="M3.8 16.5 V15.5 Q3.8 12 7.3 12 H10.8 Q14.2 12 14.2 15.5 V16.5z"/><rect x="16.5" y="5.3" width="8" height="1.8" rx="0.9"/><rect x="16.5" y="10" width="8" height="1.8" rx="0.9"/><rect x="16.5" y="14.7" width="8" height="1.8" rx="0.9"/></g></svg>
<div class="at" style="top:616.2px">Ankita Yadav had <span style="color:#f0a31e">Created</span> candidate on Jul 8 2025<br>7:43AM</div>
<div class="ad" style="top:654.9px">08/07/2025</div>
<div class="abs" style="left:1408px;top:684px;width:455px;height:1px;background:#edf0f4"></div>
<div class="ic" style="left:1408px;top:701.0px"></div>
<svg class="abs" style="left:1421px;top:717.0px" width="28" height="22" viewBox="0 0 28 22"><rect x="0" y="0.5" width="28" height="21" rx="3" fill="#ee9c0a"/><g fill="#fdebc8"><circle cx="9" cy="7.5" r="3"/><path d="M3.8 16.5 V15.5 Q3.8 12 7.3 12 H10.8 Q14.2 12 14.2 15.5 V16.5z"/><rect x="16.5" y="5.3" width="8" height="1.8" rx="0.9"/><rect x="16.5" y="10" width="8" height="1.8" rx="0.9"/><rect x="16.5" y="14.7" width="8" height="1.8" rx="0.9"/></g></svg>
<div class="at" style="top:702.8px">Ankita Yadav had <span style="color:#f0a31e">Created</span> candidate on Jul 8 2025<br>7:41AM</div>
<div class="ad" style="top:741.5px">08/07/2025</div>
<div class="abs" style="left:1408px;top:771px;width:455px;height:1px;background:#edf0f4"></div>
<div class="ic" style="left:1408px;top:787.6px"></div>
<svg class="abs" style="left:1421px;top:803.6px" width="28" height="22" viewBox="0 0 28 22"><rect x="0" y="0.5" width="28" height="21" rx="3" fill="#ee9c0a"/><g fill="#fdebc8"><circle cx="9" cy="7.5" r="3"/><path d="M3.8 16.5 V15.5 Q3.8 12 7.3 12 H10.8 Q14.2 12 14.2 15.5 V16.5z"/><rect x="16.5" y="5.3" width="8" height="1.8" rx="0.9"/><rect x="16.5" y="10" width="8" height="1.8" rx="0.9"/><rect x="16.5" y="14.7" width="8" height="1.8" rx="0.9"/></g></svg>
<div class="at" style="top:789.4px">Ankita Yadav had <span style="color:#f0a31e">Created</span> candidate on Jul 8 2025<br>7:40AM</div>
<div class="ad" style="top:828.1px">08/07/2025</div>
<div class="abs" style="left:1408px;top:858px;width:455px;height:1px;background:#edf0f4"></div>
<div class="ic" style="left:1408px;top:874.2px"></div>
<svg class="abs" style="left:1421px;top:890.2px" width="28" height="22" viewBox="0 0 28 22"><rect x="0" y="0.5" width="28" height="21" rx="3" fill="#ee9c0a"/><g fill="#fdebc8"><circle cx="9" cy="7.5" r="3"/><path d="M3.8 16.5 V15.5 Q3.8 12 7.3 12 H10.8 Q14.2 12 14.2 15.5 V16.5z"/><rect x="16.5" y="5.3" width="8" height="1.8" rx="0.9"/><rect x="16.5" y="10" width="8" height="1.8" rx="0.9"/><rect x="16.5" y="14.7" width="8" height="1.8" rx="0.9"/></g></svg>
<div class="at" style="top:876.0px">Ankita Yadav had <span style="color:#f0a31e">Created</span> candidate on Jul 8 2025<br>7:38AM</div>
<div class="ad" style="top:914.7px">08/07/2025</div>
<div class="abs" style="left:1408px;top:944px;width:455px;height:1px;background:#edf0f4"></div>




<div class="abs" style="left:1850px;top:935px;width:55px;height:45px;background:#313880;border-radius:6px;box-shadow:0 6px 10px rgba(60,70,140,0.3)"></div>
<svg class="abs" style="left:1850px;top:935px" width="55" height="45" viewBox="0 0 55 45"><circle cx="18.9" cy="17.6" r="5" fill="#fff"/><path d="M10.4 31 V29.5 Q10.4 23 15.5 22.6 Q18.9 24.5 22.4 22.6 Q27.6 23 27.6 29.5 V31 Q27.6 33 25.6 33 H12.4 Q10.4 33 10.4 31z" fill="#fff"/><path d="M39.4 16.2 V28.6 M33.1 22.3 H45.7" stroke="#fff" stroke-width="2.8" stroke-linecap="round"/></svg>
</body></html>
